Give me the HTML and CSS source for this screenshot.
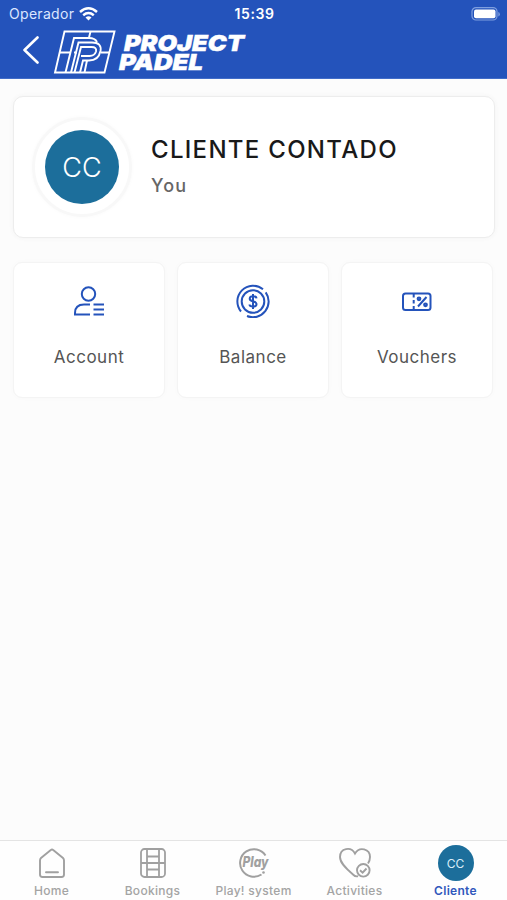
FILE: index.html
```html
<!DOCTYPE html>
<html lang="en">
<head>
<meta charset="utf-8">
<meta name="viewport" content="width=device-width">
<title>Project Padel</title>
<link rel="stylesheet" href="styles.css">
</head>
<body>
<div class="app">
  <header class="header">
    <div class="status">
      <div class="carrier"><span>Operador</span>
        <svg width="19" height="14" viewBox="0 0 19 14" fill="none" stroke="#fff" stroke-width="2.500"><path d="M1 5Q9.500-2.400 18 5M4.200 8.200Q9.500 3.900 14.800 8.200"/><path d="M6.500 10.500Q9.500 8 12.500 10.500L9.500 13.500Z" fill="#fff" stroke="none"/></svg>
      </div>
      <time class="clock">15:39</time>
      <svg class="battery" width="32" height="14" viewBox="0 0 32 14"><rect x="4" y=".6" width="25" height="12.400" rx="4" fill="none" stroke="#7f9fdf" stroke-width="1.200"/><rect x="6" y="2.500" width="21.500" height="8.800" rx="2" fill="#fff"/><path d="M30.300 5v4.500q1.500-.6 1.500-2.250T30.300 5Z" fill="#7f9fdf"/></svg>
    </div>
    <div class="brand">
      <svg class="back" width="18" height="28" viewBox="0 0 18 28"><path d="M15.500 1.500L2.500 14l13 12.500" fill="none" stroke="#fff" stroke-width="2.600" stroke-linecap="round" stroke-linejoin="round"/></svg>
      <svg class="logo" width="200" height="46" viewBox="0 0 200 46">
        <g fill="none" stroke="#fff" stroke-width="1.900">
          <path d="M11.500 2.500H61.500L51.500 43.500H2Z"/>
          <path d="M7 23.500H17M21 23.500H24M48 23.500H56M37.500 2.500L36 8.500M34 31.500L31.500 43.500"/>
          <path d="M12.500 43.500L21 9H36Q42 9 44 13"/>
          <path d="M18 43.500L25.500 13.500H39Q49 13.500 47.500 22Q45.500 31.500 36 31.500H30L27 43.500"/>
          <path d="M21.500 43.500L28 18H38.500Q44 18 43 22.500Q41.500 27 36.500 27H28"/>
        </g>
        <g class="logo-name"><text x="71" y="21.500" textLength="120" lengthAdjust="spacingAndGlyphs">PROJECT</text><text x="66" y="40.500" textLength="84" lengthAdjust="spacingAndGlyphs">PADEL</text></g>
      </svg>
    </div>
  </header>
  <main class="content">
    <section class="profile">
      <div class="avatar-ring"><div class="avatar">CC</div></div>
      <div class="person"><h1>CLIENTE CONTADO</h1><p>You</p></div>
    </section>
    <section class="tiles">
      <a class="tile">
        <svg width="32" height="32" viewBox="0 0 32 32" fill="none" stroke="#2453bb" stroke-width="2"><circle cx="15.500" cy="9" r="6.700"/><path d="M17 29.500H2V28Q2 19.500 11 19.500H17M20.500 19.500H31M20.500 24.500H31M20.500 29.500H31"/></svg>
        <span>Account</span>
      </a>
      <a class="tile">
        <svg width="34" height="34" viewBox="0 0 34 34" fill="none" stroke="#2453bb" stroke-width="2"><circle cx="17" cy="17.500" r="11.300"/><path d="M27 5.300A15.700 15.700 0 0 0 5 27.500M29.700 8.300A15.700 15.700 0 0 1 11 32M20.500 14.300Q20.200 12.300 17 12.300T13.700 14.700Q13.700 16.500 17 17.200T20.500 20.200Q20.500 22.500 17 22.500T13.500 20.500M17 10V25"/></svg>
        <span>Balance</span>
      </a>
      <a class="tile">
        <svg width="30" height="19" viewBox="0 0 30 19" fill="none" stroke="#2453bb" stroke-width="2"><rect x="1" y="1.500" width="27.500" height="16.500" rx="2.500"/><path d="M11.700 1V5.500M11.700 8V11.500M11.700 14V18M24.500 5L16 14.500"/><g stroke-width="2.200"><circle cx="17" cy="6.800" r="1.300"/><circle cx="23.500" cy="12.800" r="1.300"/></g></svg>
        <span>Vouchers</span>
      </a>
    </section>
  </main>
  <nav class="tabs">
    <a class="tab">
      <svg width="36" height="36" viewBox="0 0 36 36" fill="none" stroke="#a0a0a0" stroke-width="1.900" stroke-linejoin="round" stroke-linecap="round"><path d="M16.800 5Q18 3.900 19.200 5L29 13Q30 14 30 15.500V29.500Q30 32 27.500 32H8.500Q6 32 6 29.500V15.500Q6 14 7 13ZM12 27.300H24"/></svg>
      <span>Home</span>
    </a>
    <a class="tab">
      <svg width="36" height="36" viewBox="0 0 36 36" fill="none" stroke="#a0a0a0" stroke-width="1.800"><rect x="6" y="4" width="24" height="28" rx="3.500"/><path d="M12 4V32M24 4V32M6 18H30M12 11.500H24M12 24.500H24"/></svg>
      <span>Bookings</span>
    </a>
    <a class="tab">
      <svg width="36" height="36" viewBox="0 0 36 36"><path d="M29.500 10.500A13.800 13.800 0 1 0 25.500 29.500" fill="none" stroke="#a0a0a0" stroke-width="2"/><text class="play" x="6.500" y="22" textLength="26" lengthAdjust="spacingAndGlyphs">Play</text><circle cx="27.500" cy="27.500" r="1.300" fill="#a0a0a0"/></svg>
      <span>Play! system</span>
    </a>
    <a class="tab">
      <svg width="36" height="36" viewBox="0 0 36 36" fill="none" stroke="#a0a0a0" stroke-width="1.900"><path d="M21 31.200Q18.500 32 16 29.500C9 23.500 3 18 3 12C3 3 14 1 18 8.500C22.500 1 33 4 33 12Q33 15.500 31 18.500"/><circle cx="26.300" cy="25.300" r="6.300"/><path d="M23 25.300L25.600 27.600L29.500 23.500"/></svg>
      <span>Activities</span>
    </a>
    <a class="tab active">
      <div class="mini-avatar">CC</div>
      <span>Cliente</span>
    </a>
  </nav>
</div>
</body>
</html>
```

FILE: styles.css
```css
* { box-sizing: border-box; }
body { margin: 0; background: #fcfcfc; font-family: Inter, "Liberation Sans", sans-serif; }
.app { height: 900px; display: flex; flex-direction: column; }
.header { height: 79px; flex: none; background: #2453bb; color: #fff; border-bottom: 1px solid #416cc8; }
.status { height: 27px; display: grid; grid-template-columns: 1fr auto 1fr; align-items: center; padding: 0 7px 0 9px; }
.carrier { display: flex; align-items: center; gap: 5px; font-size: 14px; letter-spacing: .3px; color: #dce6ff; }
.clock { font-size: 14px; font-weight: 600; letter-spacing: .6px; }
.battery { justify-self: end; }
.brand { display: flex; align-items: flex-start; padding: 2px 0 0 22px; gap: 13px; }
.back { margin-top: 7px; }
.logo { overflow: visible; }
.logo-name { fill: #fff; stroke: #fff; stroke-width: .5px; font: italic 900 22px Inter, sans-serif; }
.content { flex: 1; padding: 17px 15px 0 13px; }
.profile { width: 482px; height: 142px; display: flex; align-items: center; background: #fff; border: 1.500px solid #ededed; border-radius: 10px; padding-left: 18px; box-shadow: 0 0 5px #f3f3f3; }
.avatar-ring { width: 100px; height: 100px; border: 3px solid #f8f8f8; border-radius: 50%; display: grid; place-items: center; box-shadow: 0 0 4px #fafafa; }
.avatar { width: 74px; height: 74px; border-radius: 50%; background: #1c6e9b; color: #fff; display: grid; place-items: center; font-size: 27px; font-weight: 300; }
.person { margin: -1px 0 0 19px; }
h1 { font-size: 24px; line-height: 30px; font-weight: 500; letter-spacing: 1.300px; color: #191919; margin: 0; white-space: nowrap; }
.person p { margin: 9px 0 0; font-size: 18px; line-height: 24px; font-weight: 500; letter-spacing: 1.200px; color: #666; }
.tiles { display: grid; grid-template-columns: repeat(3, 152px); gap: 12px; margin-top: 24px; }
.tile { height: 136px; background: #fff; border: 1.500px solid #f4f4f4; border-radius: 9px; display: grid; grid-template-rows: 34px 24px; row-gap: 27px; justify-items: center; align-items: center; align-content: start; padding-top: 21px; box-shadow: 0 0 4px #f8f8f8; color: #555; }
.tile span { font-size: 17px; line-height: 24px; letter-spacing: .5px; }
.tabs { height: 60px; flex: none; background: #fefefe; border-top: 1.500px solid #e4e4e4; display: grid; grid-template-columns: repeat(5, 101px); padding-left: 1px; color: #a4a4a4; }
.tab { display: flex; flex-direction: column; align-items: center; padding-top: 4px; }
.tab svg, .mini-avatar { flex: none; width: 36px; height: 36px; }
.tab span { margin-top: 2px; font-size: 12px; line-height: 16px; font-weight: 500; letter-spacing: .3px; white-space: nowrap; }
.play { fill: #a0a0a0; font: italic 800 14px Inter, sans-serif; }
.mini-avatar { background: #1c6e9b; border-radius: 50%; color: #d9edf8; display: grid; place-items: center; font-size: 12px; }
.tab.active span { color: #3158bc; font-weight: 600; }
```
